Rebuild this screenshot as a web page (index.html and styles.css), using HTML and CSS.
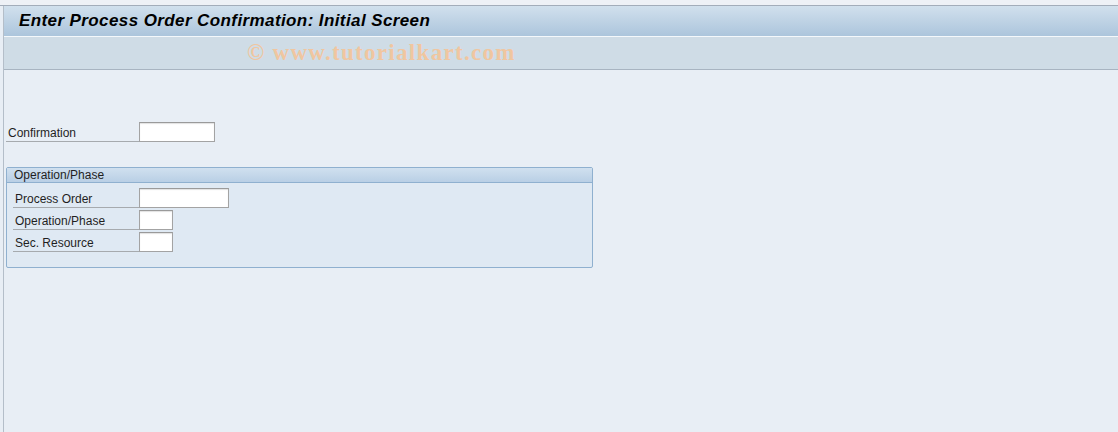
FILE: index.html
```html
<!DOCTYPE html>
<html lang="en">
<head>
    <meta charset="UTF-8">
    <title>Enter Process Order Confirmation: Initial Screen</title>
    <link rel="stylesheet" href="styles.css">
</head>
<body>

<div class="top-strip"></div>

<div class="frame">
    <header class="title-bar">
        <h1>Enter Process Order Confirmation: Initial Screen</h1>
    </header>

    <div class="toolbar">
        <span class="watermark">&copy; www.tutorialkart.com</span>
    </div>

    <section class="content">
        <div class="field-row top-field">
            <label class="field-label">Confirmation</label>
            <input type="text" class="field-input w-confirmation">
        </div>

        <div class="group">
            <div class="group-title">Operation/Phase</div>
            <div class="group-body">
                <div class="field-row">
                    <label class="field-label">Process Order</label>
                    <input type="text" class="field-input w-order">
                </div>
                <div class="field-row">
                    <label class="field-label">Operation/Phase</label>
                    <input type="text" class="field-input w-short">
                </div>
                <div class="field-row">
                    <label class="field-label">Sec. Resource</label>
                    <input type="text" class="field-input w-short">
                </div>
            </div>
        </div>
    </section>
</div>

</body>
</html>
```

FILE: styles.css
```css
html, body {
    height: 100%;
}
body {
    margin: 0;
    font-family: "Liberation Sans", Arial, sans-serif;
    font-size: 12px;
    color: #1f1f1f;
    background-color: #e8eef5;
    display: flex;
    flex-direction: column;
}
.top-strip {
    height: 5px;
    background-color: #eef1f6;
    border-bottom: 1px solid #a3adba;
}
.frame {
    flex: 1;
    margin-left: 3px;
    border-left: 1px solid #b4bec9;
    display: flex;
    flex-direction: column;
}
.title-bar {
    height: 30px;
    background: linear-gradient(to bottom, #d1e0ed, #acc5dc);
    border-bottom: 1px solid #f4f8fb;
    display: flex;
    align-items: center;
    padding-left: 15px;
}
.title-bar h1 {
    margin: 0;
    font-size: 17px;
    letter-spacing: 0.4px;
    font-weight: bold;
    font-style: italic;
    color: #000;
}
.toolbar {
    height: 32px;
    background-color: #cfdce6;
    border-bottom: 1px solid #a8b4c1;
    display: flex;
    align-items: center;
    padding-left: 243px;
}
.watermark {
    font-family: "Liberation Serif", "Times New Roman", serif;
    font-weight: bold;
    font-size: 23px;
    letter-spacing: 1.3px;
    color: #f0c6a0;
}
.content {
    flex: 1;
    padding: 52px 0 0 2px;
}
.field-row {
    display: flex;
    height: 20px;
    margin-bottom: 2px;
}
.top-field {
    margin-bottom: 25px;
}
.field-label {
    box-sizing: border-box;
    height: 20px;
    width: 133px;
    padding: 3px 0 0 2px;
    border-bottom: 1px solid #a6aaae;
    line-height: 16px;
}
.field-input {
    box-sizing: border-box;
    height: 20px;
    margin: 0;
    padding: 0 3px;
    border: 1px solid #a3a3a3;
    border-top-color: #9a9a9a;
    box-shadow: inset 0 1px 1px #e2e2e2;
    background-color: #fff;
    font: inherit;
}
.w-confirmation {
    width: 76px;
}
.w-order {
    width: 90px;
}
.w-short {
    width: 34px;
}
.group {
    width: 585px;
    border: 1px solid #8fb0cf;
    border-radius: 2px;
    background-color: #dfe9f3;
}
.group-title {
    height: 14px;
    line-height: 15px;
    padding-left: 7px;
    background: linear-gradient(to bottom, #d0e0ef, #b9cfe5);
    border-bottom: 1px solid #8fb0cf;
}
.group-body {
    padding: 5px 0 13px 6px;
}
.group-body .field-label {
    width: 126px;
}
```
